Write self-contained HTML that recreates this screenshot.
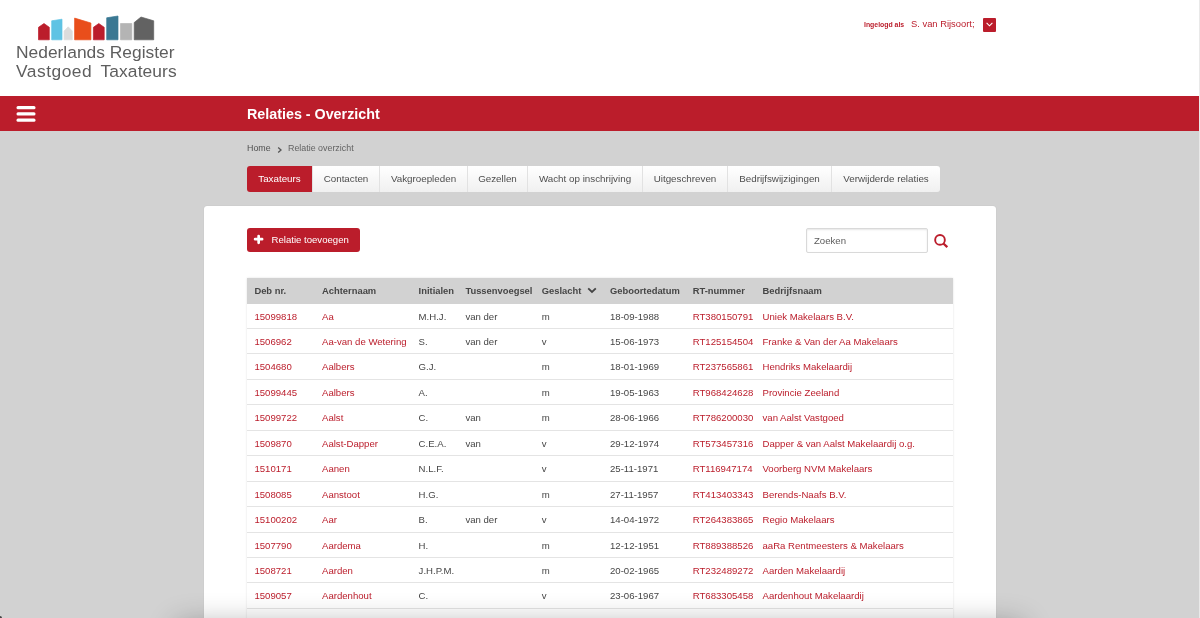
<!DOCTYPE html>
<html><head><meta charset="utf-8">
<style>
*{margin:0;padding:0;box-sizing:border-box}
html,body{width:1200px;height:618px;overflow:hidden;background:#d2d2d2;font-family:"Liberation Sans",sans-serif}
#wrap{position:absolute;left:0;top:0;width:1200px;height:618px;will-change:transform}
#top{position:absolute;left:0;top:0;width:1200px;height:95.5px;background:#fff}
#logo{position:absolute;left:0;top:0;width:200px;height:96px}
.logotxt{position:absolute;left:16px;font-size:17.4px;color:#5e5e5e;white-space:pre;letter-spacing:0}
#user{position:absolute;left:864px;top:16px;color:#bb1d2b;white-space:nowrap}
#user .l{position:absolute;left:0;top:5px;font-size:6.9px;font-weight:bold}
#user .n{position:absolute;left:47px;top:2px;font-size:9.4px}
#user .dd{position:absolute;left:119.3px;top:2.3px;width:12.7px;height:13.4px;background:#bb1d2b;border-radius:1px}
#bar{position:absolute;left:0;top:95.5px;width:1200px;height:35.3px;background:#bb1d2b}
.hb{position:absolute;left:16.5px;width:19px;height:3.2px;background:#fff;border-radius:1.6px}
#title{position:absolute;left:247px;top:105.9px;font-size:14.3px;font-weight:bold;color:#fff;white-space:nowrap}
#crumb{position:absolute;left:247px;top:143px;width:200px;height:12px;font-size:8.9px;color:#555;white-space:nowrap}
#crumb span{white-space:nowrap}
#tabs{position:absolute;left:247px;top:166px;height:26px;display:flex}
.tab{height:26px;line-height:26px;font-size:9.8px;color:#4e4e4e;background:linear-gradient(#fff,#f0f0f0);border-left:1px solid #e2e2e2;text-align:center;white-space:nowrap}
.tab.act{background:#bb1d2b;color:#fff;border-left:none;border-radius:3px 0 0 3px}
.tab.last{border-radius:0 3px 3px 0}
#panel{position:absolute;left:204px;top:206px;width:792px;height:430px;background:#fff;border-radius:3px;box-shadow:0 0 1px rgba(0,0,0,.18)}
#btn{position:absolute;left:247px;top:228px;width:113px;height:24px;background:#bb1d2b;border-radius:3px;color:#fff;font-size:9.6px;white-space:nowrap}
#search{position:absolute;left:806px;top:227.8px;width:122px;height:25.6px;border:1px solid #d9d9d9;border-radius:2px;box-shadow:inset 0 1px 2px rgba(0,0,0,.1);background:#fff}
#search span{position:absolute;left:7px;top:6px;font-size:9.6px;color:#5c5c5c}
#table{position:absolute;left:247px;top:278px;width:706px;box-shadow:0 0 2px rgba(0,0,0,.12)}
#bshadow{position:absolute;left:185px;top:632px;width:830px;height:40px;box-shadow:0 0 30px 8px rgba(0,0,0,.32);background:#888}
.row{position:relative;height:25.45px;border-bottom:1px solid #e4e4e4;background:#fff}
.row.h{height:25.6px;background:#d2d2d2;border-bottom:none}
.c{position:absolute;top:0;line-height:25px;font-size:9.6px;color:#464646;white-space:nowrap}
.row.h .c{font-weight:bold;font-size:9.4px;line-height:26px}
.red{color:#bb1d2b}
</style></head><body><div id="wrap">
<div id="top">
  <svg id="logo" width="200" height="96" viewBox="0 0 200 96">
    <path d="M38.5 27.3 L44 23.5 L49.3 27.3 V39.8 H38.5Z" fill="#bb1d2b" stroke="#bb1d2b" stroke-width="0.7" stroke-linejoin="round"/>
    <path d="M51.7 20.8 L62 19.2 V39.8 H51.7Z" fill="#5fc3e4" stroke="#5fc3e4" stroke-width="0.7" stroke-linejoin="round"/>
    <path d="M64.1 31 L68.2 26.8 L72.3 31 V39.8 H64.1Z" fill="#dcdcdc" stroke="#dcdcdc" stroke-width="0.7" stroke-linejoin="round"/>
    <path d="M74.6 18.1 L90.9 23 V39.8 H74.6Z" fill="#e94e1b" stroke="#e94e1b" stroke-width="0.7" stroke-linejoin="round"/>
    <path d="M93.4 27.3 L98.8 23.5 L104.2 27.3 V39.8 H93.4Z" fill="#bb1d2b" stroke="#bb1d2b" stroke-width="0.7" stroke-linejoin="round"/>
    <path d="M106.7 17.8 L118 16 V39.8 H106.7Z" fill="#3a7893" stroke="#3a7893" stroke-width="0.7" stroke-linejoin="round"/>
    <path d="M120.5 23.5 H131.8 V39.8 H120.5Z" fill="#b4b4b4" stroke="#b4b4b4" stroke-width="0.7" stroke-linejoin="round"/>
    <path d="M134.2 22.5 L141 17 L153.7 20.8 V39.8 H134.2Z" fill="#626262" stroke="#626262" stroke-width="0.7" stroke-linejoin="round"/>
  </svg>
  <div class="logotxt" style="top:41.6px">Nederlands Register</div>
  <div class="logotxt" style="top:61px;letter-spacing:0.5px">Vastgoed</div><div class="logotxt" style="top:61px;left:100.5px;letter-spacing:0.1px">Taxateurs</div>
  <div id="user"><span class="l">Ingelogd als</span><span class="n">S. van Rijsoort;</span><span class="dd"><svg style="position:absolute;left:3px;top:3.9px" width="7" height="5" viewBox="0 0 7 5"><path d="M0.6 0.8 L3.5 3.8 L6.4 0.8" fill="none" stroke="#fff" stroke-width="1.1"/></svg></span></div>
</div>
<div id="bar">
  <svg style="position:absolute;left:0;top:0.5px" width="60" height="35" viewBox="0 0 60 35"><g fill="#fff"><rect x="16.5" y="10" width="19" height="3.2" rx="1.5"/><rect x="16.5" y="16.3" width="19" height="3.2" rx="1.5"/><rect x="16.5" y="22.6" width="19" height="3.2" rx="1.5"/></g></svg>
</div>
<div id="title">Relaties - Overzicht</div>
<div id="crumb"><span style="position:absolute;left:0;top:0;color:#505050">Home</span><svg style="position:absolute;left:30px;top:3.5px" width="6" height="7" viewBox="0 0 6 7"><path d="M1.2 0.6 L4 3 L1.2 5.4" fill="none" stroke="#555" stroke-width="1.3"/></svg><span style="position:absolute;left:41px;top:0;color:#626262">Relatie overzicht</span></div>
<div id="tabs">
  <div class="tab act" style="width:65px">Taxateurs</div>
  <div class="tab" style="width:67px">Contacten</div>
  <div class="tab" style="width:88px">Vakgroepleden</div>
  <div class="tab" style="width:60px">Gezellen</div>
  <div class="tab" style="width:115px">Wacht op inschrijving</div>
  <div class="tab" style="width:85px">Uitgeschreven</div>
  <div class="tab" style="width:104px">Bedrijfswijzigingen</div>
  <div class="tab last" style="width:109px">Verwijderde relaties</div>
</div>
<div id="panel"></div>
<div id="btn"><svg style="position:absolute;left:0;top:0" width="24" height="24" viewBox="0 0 24 24"><path d="M11.65 8V14.8M8.1 11.2H15.1" stroke="#fff" stroke-width="2.7" stroke-linecap="round"/></svg><span style="position:absolute;left:24.5px;top:6px">Relatie toevoegen</span></div>
<div id="search"><span>Zoeken</span></div><svg style="position:absolute;left:932px;top:232px" width="18" height="18" viewBox="0 0 18 18"><circle cx="8" cy="7.9" r="4.85" fill="none" stroke="#bb1d2b" stroke-width="1.9"/><path d="M11.4 11.5 L15.3 15.2" stroke="#bb1d2b" stroke-width="2.3" stroke-linecap="butt"/></svg>
<div id="table">
<div class="row h">
<span class="c" style="left:7.4px">Deb nr.</span>
<span class="c" style="left:75.0px">Achternaam</span>
<span class="c" style="left:171.6px">Initialen</span>
<span class="c" style="left:218.4px">Tussenvoegsel</span>
<span class="c" style="left:294.7px">Geslacht</span>
<span class="c" style="left:363.0px">Geboortedatum</span>
<span class="c" style="left:445.7px">RT-nummer</span>
<span class="c" style="left:515.5px">Bedrijfsnaam</span>
<svg style="position:absolute;left:340px;top:9.3px" width="10" height="7" viewBox="0 0 10 7"><path d="M1.2 1.3 L5 5 L8.8 1.3" fill="none" stroke="#444" stroke-width="1.8"/></svg></div>
<div class="row">
<span class="c red" style="left:7.4px">15099818</span>
<span class="c red" style="left:75.0px">Aa</span>
<span class="c" style="left:171.6px">M.H.J.</span>
<span class="c" style="left:218.4px">van der</span>
<span class="c" style="left:294.7px">m</span>
<span class="c" style="left:363.0px">18-09-1988</span>
<span class="c red" style="left:445.7px">RT380150791</span>
<span class="c red" style="left:515.5px">Uniek Makelaars B.V.</span>
</div>
<div class="row">
<span class="c red" style="left:7.4px">1506962</span>
<span class="c red" style="left:75.0px">Aa-van de Wetering</span>
<span class="c" style="left:171.6px">S.</span>
<span class="c" style="left:218.4px">van der</span>
<span class="c" style="left:294.7px">v</span>
<span class="c" style="left:363.0px">15-06-1973</span>
<span class="c red" style="left:445.7px">RT125154504</span>
<span class="c red" style="left:515.5px">Franke &amp; Van der Aa Makelaars</span>
</div>
<div class="row">
<span class="c red" style="left:7.4px">1504680</span>
<span class="c red" style="left:75.0px">Aalbers</span>
<span class="c" style="left:171.6px">G.J.</span>
<span class="c" style="left:294.7px">m</span>
<span class="c" style="left:363.0px">18-01-1969</span>
<span class="c red" style="left:445.7px">RT237565861</span>
<span class="c red" style="left:515.5px">Hendriks Makelaardij</span>
</div>
<div class="row">
<span class="c red" style="left:7.4px">15099445</span>
<span class="c red" style="left:75.0px">Aalbers</span>
<span class="c" style="left:171.6px">A.</span>
<span class="c" style="left:294.7px">m</span>
<span class="c" style="left:363.0px">19-05-1963</span>
<span class="c red" style="left:445.7px">RT968424628</span>
<span class="c red" style="left:515.5px">Provincie Zeeland</span>
</div>
<div class="row">
<span class="c red" style="left:7.4px">15099722</span>
<span class="c red" style="left:75.0px">Aalst</span>
<span class="c" style="left:171.6px">C.</span>
<span class="c" style="left:218.4px">van</span>
<span class="c" style="left:294.7px">m</span>
<span class="c" style="left:363.0px">28-06-1966</span>
<span class="c red" style="left:445.7px">RT786200030</span>
<span class="c red" style="left:515.5px">van Aalst Vastgoed</span>
</div>
<div class="row">
<span class="c red" style="left:7.4px">1509870</span>
<span class="c red" style="left:75.0px">Aalst-Dapper</span>
<span class="c" style="left:171.6px">C.E.A.</span>
<span class="c" style="left:218.4px">van</span>
<span class="c" style="left:294.7px">v</span>
<span class="c" style="left:363.0px">29-12-1974</span>
<span class="c red" style="left:445.7px">RT573457316</span>
<span class="c red" style="left:515.5px">Dapper &amp; van Aalst Makelaardij o.g.</span>
</div>
<div class="row">
<span class="c red" style="left:7.4px">1510171</span>
<span class="c red" style="left:75.0px">Aanen</span>
<span class="c" style="left:171.6px">N.L.F.</span>
<span class="c" style="left:294.7px">v</span>
<span class="c" style="left:363.0px">25-11-1971</span>
<span class="c red" style="left:445.7px">RT116947174</span>
<span class="c red" style="left:515.5px">Voorberg NVM Makelaars</span>
</div>
<div class="row">
<span class="c red" style="left:7.4px">1508085</span>
<span class="c red" style="left:75.0px">Aanstoot</span>
<span class="c" style="left:171.6px">H.G.</span>
<span class="c" style="left:294.7px">m</span>
<span class="c" style="left:363.0px">27-11-1957</span>
<span class="c red" style="left:445.7px">RT413403343</span>
<span class="c red" style="left:515.5px">Berends-Naafs B.V.</span>
</div>
<div class="row">
<span class="c red" style="left:7.4px">15100202</span>
<span class="c red" style="left:75.0px">Aar</span>
<span class="c" style="left:171.6px">B.</span>
<span class="c" style="left:218.4px">van der</span>
<span class="c" style="left:294.7px">v</span>
<span class="c" style="left:363.0px">14-04-1972</span>
<span class="c red" style="left:445.7px">RT264383865</span>
<span class="c red" style="left:515.5px">Regio Makelaars</span>
</div>
<div class="row">
<span class="c red" style="left:7.4px">1507790</span>
<span class="c red" style="left:75.0px">Aardema</span>
<span class="c" style="left:171.6px">H.</span>
<span class="c" style="left:294.7px">m</span>
<span class="c" style="left:363.0px">12-12-1951</span>
<span class="c red" style="left:445.7px">RT889388526</span>
<span class="c red" style="left:515.5px">aaRa Rentmeesters &amp; Makelaars</span>
</div>
<div class="row">
<span class="c red" style="left:7.4px">1508721</span>
<span class="c red" style="left:75.0px">Aarden</span>
<span class="c" style="left:171.6px">J.H.P.M.</span>
<span class="c" style="left:294.7px">m</span>
<span class="c" style="left:363.0px">20-02-1965</span>
<span class="c red" style="left:445.7px">RT232489272</span>
<span class="c red" style="left:515.5px">Aarden Makelaardij</span>
</div>
<div class="row">
<span class="c red" style="left:7.4px">1509057</span>
<span class="c red" style="left:75.0px">Aardenhout</span>
<span class="c" style="left:171.6px">C.</span>
<span class="c" style="left:294.7px">v</span>
<span class="c" style="left:363.0px">23-06-1967</span>
<span class="c red" style="left:445.7px">RT683305458</span>
<span class="c red" style="left:515.5px">Aardenhout Makelaardij</span>
</div>
<div class="row"></div>
</div>
<div id="bshadow"></div>
<div style="position:absolute;left:1199px;top:0;width:1px;height:618px;background:#e9e9e9"></div>
<div style="position:absolute;left:-2px;top:616px;width:4px;height:4px;border-radius:50%;background:#444;filter:blur(0.5px)"></div>
</div></body></html>
